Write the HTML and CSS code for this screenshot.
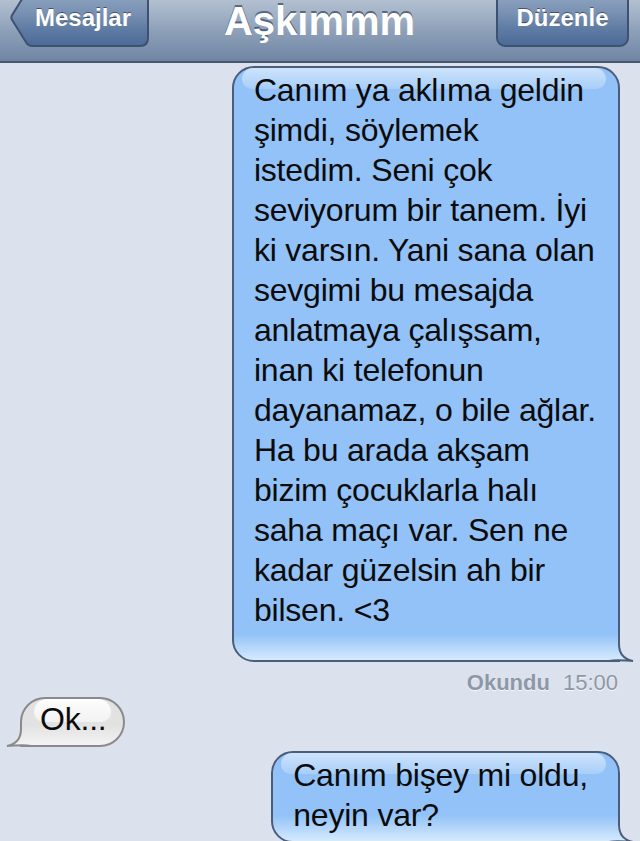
FILE: index.html
```html
<!DOCTYPE html>
<html lang="tr">
<head>
  <meta charset="UTF-8">
  <title>Aşkımmm</title>
  <link rel="stylesheet" href="styles.css">
</head>
<body>
<div class="navbar">
  <a href="javascript:void(0);" class="nav-btn back">
    <svg class="back-shape" viewBox="0 0 139 59" width="139" height="59">
      <defs>
        <linearGradient id="backFill" x1="0" y1="0" x2="0" y2="1">
          <stop offset="0" stop-color="#93a8c4"/>
          <stop offset="0.4" stop-color="#7a92b3"/>
          <stop offset="0.7" stop-color="#5f7ca4"/>
          <stop offset="1" stop-color="#4b6a96"/>
        </linearGradient>
      </defs>
      <path d="M22,1 H130 Q138,1 138,9 V50 Q138,58 130,58 H22 Q18.5,58 16.5,55 L2,31.8 Q0.8,29.5 2,27.2 L16.5,4 Q18.5,1 22,1 Z" fill="url(#backFill)" stroke="#3e5171" stroke-width="2"/>
    </svg>
    <span>Mesajlar</span>
  </a>
  <h1 class="title">Aşkımmm</h1>
  <a href="javascript:void(0);" class="nav-btn edit">Düzenle</a>
</div>

<div class="chat">
  <div class="msg sent">
    <div class="bubble first">
      <p class="text">Canım ya aklıma geldin<br>şimdi, söylemek<br>istedim. Seni çok<br>seviyorum bir tanem. İyi<br>ki varsın. Yani sana olan<br>sevgimi bu mesajda<br>anlatmaya çalışsam,<br>inan ki telefonun<br>dayanamaz, o bile ağlar.<br>Ha bu arada akşam<br>bizim çocuklarla halı<br>saha maçı var. Sen ne<br>kadar güzelsin ah bir<br>bilsen. &lt;3</p>
      <svg class="tail" viewBox="0 0 30 24">
        <defs>
          <linearGradient id="tailBlue1" gradientUnits="userSpaceOnUse" x1="0" y1="-4" x2="0" y2="22">
            <stop offset="0" stop-color="#92c2f7"/>
            <stop offset="1" stop-color="#d5eafd"/>
          </linearGradient>
        </defs>
        <path d="M15,0 V6 C15,15 19,21 29,23 C23,23 16,21.5 9,22.4 C5,23 2,23 0,23 V0 Z" fill="url(#tailBlue1)"/>
        <path d="M15,0 V6 C15,15 19,21 29,23 C23,23 16,21.5 9,22.4 C5,23 2,23 0,23" fill="none" stroke="#4a5d7b" stroke-width="2"/>
      </svg>
    </div>
  </div>

  <div class="status"><b>Okundu</b><span>15:00</span></div>

  <div class="msg received">
    <div class="bubble">
      <p class="text">Ok...</p>
      <svg class="tail" viewBox="0 0 30 24">
        <defs>
          <linearGradient id="tailGray" gradientUnits="userSpaceOnUse" x1="0" y1="2" x2="0" y2="22">
            <stop offset="0" stop-color="#e2e2e2"/>
            <stop offset="1" stop-color="#f3f3f3"/>
          </linearGradient>
        </defs>
        <path d="M15,0 V6 C15,15 19,21 29,23 C23,23 16,21.5 9,22.4 C5,23 2,23 0,23 V0 Z" fill="url(#tailGray)"/>
        <path d="M15,0 V6 C15,15 19,21 29,23 C23,23 16,21.5 9,22.4 C5,23 2,23 0,23" fill="none" stroke="#8a8a8a" stroke-width="2"/>
      </svg>
    </div>
  </div>

  <div class="msg sent last">
    <div class="bubble">
      <p class="text">Canım bişey mi oldu,<br>neyin var?</p>
      <svg class="tail" viewBox="0 0 30 24">
        <defs>
          <linearGradient id="tailBlue2" gradientUnits="userSpaceOnUse" x1="0" y1="-4" x2="0" y2="22">
            <stop offset="0" stop-color="#92c2f7"/>
            <stop offset="1" stop-color="#d5eafd"/>
          </linearGradient>
        </defs>
        <path d="M15,0 V6 C15,15 19,21 29,23 C23,23 16,21.5 9,22.4 C5,23 2,23 0,23 V0 Z" fill="url(#tailBlue2)"/>
        <path d="M15,0 V6 C15,15 19,21 29,23 C23,23 16,21.5 9,22.4 C5,23 2,23 0,23" fill="none" stroke="#4a5d7b" stroke-width="2"/>
      </svg>
    </div>
  </div>
</div>
</body>
</html>
```

FILE: styles.css
```css
* {
  margin: 0;
  padding: 0;
  box-sizing: border-box;
}
html, body {
  height: 100%;
  overflow: hidden;
}
body {
  background-color: #dbe2ed;
  font-family: "Liberation Sans", Arial, sans-serif;
}
a {
  text-decoration: none;
  color: #fff;
}

/* ust bar */
.navbar {
  display: grid;
  grid-template-columns: 1fr auto 1fr;
  align-items: center;
  height: 89px;
  margin-top: -26px;
  padding: 0 11px 0 10px;
  background-image: linear-gradient(#cfd7e2 0%, #b3c0d1 30%, #91a3bb 62%, #6e85a3 100%);
  border-bottom: 2px solid #49586e;
}
.nav-btn {
  position: relative;
  display: flex;
  align-items: center;
  height: 59px;
  font-size: 24px;
  font-weight: bold;
  color: #fff;
  text-shadow: 0 -1px 0 rgba(0, 0, 0, .45);
}
.nav-btn.back {
  justify-self: start;
  width: 139px;
  padding-left: 25px;
}
.back-shape {
  position: absolute;
  left: 0;
  top: 0;
}
.nav-btn.back span {
  position: relative;
}
.nav-btn.edit {
  justify-self: end;
  width: 133px;
  justify-content: center;
  border: 2px solid #3e5171;
  border-radius: 9px;
  background-image: linear-gradient(#93a8c4, #7a92b3 40%, #5f7ca4 70%, #4b6a96);
}
.title {
  margin-top: 6px;
  font-size: 40px;
  line-height: 30px;
  font-weight: bold;
  color: #fff;
  text-shadow: 0 -2px 0 rgba(45, 58, 80, .65);
}

/* mesajlar */
.chat {
  display: flex;
  flex-direction: column;
  padding-top: 3px;
}
.msg {
  display: flex;
}
.msg.sent {
  justify-content: flex-end;
  padding-right: 20px;
}
.msg.received {
  justify-content: flex-start;
  padding-left: 20px;
  margin-top: 1px;
}
.msg.last {
  margin-top: 4px;
}
.bubble {
  position: relative;
  border: 2px solid #4a5d7b;
  border-radius: 22px 22px 0 22px;
  padding: 2px 22px 6px 20px;
  font-size: 32px;
  line-height: 40px;
  letter-spacing: -0.2px;
  white-space: nowrap;
  color: #0b0b0b;
  background-image: linear-gradient(#92c2f7 calc(100% - 26px), #d5eafd);
}
.bubble::before {
  content: "";
  position: absolute;
  top: 0;
  left: 8px;
  right: 12px;
  height: 21px;
  border-radius: 14px 14px 12px 12px;
  background-image: linear-gradient(rgba(255, 255, 255, .55), rgba(255, 255, 255, .2));
}
.bubble .text {
  position: relative;
}
.bubble.first {
  padding-bottom: 30px;
}
.msg.last .bubble {
  padding-right: 30px;
}
.tail {
  position: absolute;
  right: -16px;
  bottom: -2px;
  width: 30px;
  height: 24px;
  overflow: visible;
}
.received .bubble {
  border-color: #8a8a8a;
  border-radius: 25px 25px 25px 0;
  padding: 0 16px 6px 18px;
  background-image: linear-gradient(#e2e2e2 calc(100% - 20px), #f3f3f3);
}
.received .bubble::before {
  left: 12px;
  right: 12px;
  height: 23px;
  border-radius: 16px 16px 12px 12px;
  background-image: linear-gradient(rgba(255, 255, 255, .95), rgba(255, 255, 255, .55));
}
.received .tail {
  right: auto;
  left: -16px;
  transform: scaleX(-1);
}

.status {
  margin-top: 8px;
  padding-right: 22px;
  text-align: right;
  font-size: 22px;
  line-height: 26px;
  color: #8e97a6;
  text-shadow: 0 1px 0 rgba(255, 255, 255, .8);
}
.status span {
  margin-left: 13px;
}
```
